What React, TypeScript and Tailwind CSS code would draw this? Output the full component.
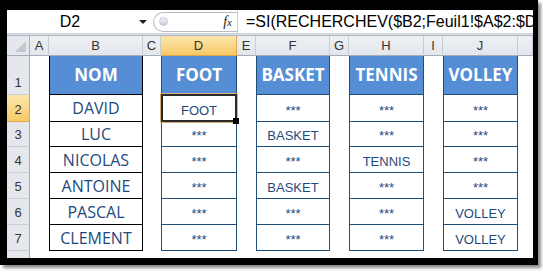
import React from 'react';

const letters = ['A', 'B', 'C', 'D', 'E', 'F', 'G', 'H', 'I', 'J', ''];
const sports = ['FOOT', 'BASKET', 'TENNIS', 'VOLLEY'];
const rows = [
  ['DAVID', 'FOOT', '***', '***', '***'],
  ['LUC', '***', 'BASKET', '***', '***'],
  ['NICOLAS', '***', '***', 'TENNIS', '***'],
  ['ANTOINE', '***', 'BASKET', '***', '***'],
  ['PASCAL', '***', '***', '***', 'VOLLEY'],
  ['CLEMENT', '***', '***', '***', 'VOLLEY'],
];

const arial = "font-['Liberation_Sans',Arial,sans-serif]";
const sans = "font-['Open_Sans','Noto_Sans',sans-serif]";

const RowHeader: React.FC<{ n?: number; active?: boolean }> = ({ n, active }) => (
  <div
    className={
      active
        ? `flex items-end justify-center pb-[4px] border-r border-b border-[#e3a54a] bg-gradient-to-b from-[#fce6ab] to-[#f6c965] text-[13px] leading-[15px] text-[#333] ${arial}`
        : `flex items-end justify-center pb-[4px] border-r border-b border-r-[#a3adba] border-b-[#c8cdd4] bg-[#e4e8ed] text-[13px] leading-[15px] text-[#333] ${arial}`
    }
  >
    {n}
  </div>
);

const Blank = () => <div className="bg-white" />;

const App: React.FC = () => {
  return (
    <div className="w-[543px] h-[273px] bg-white">
      <div className="w-[538px] h-[265px] bg-black pt-[10px] pl-[7px] pr-[5px] pb-[7px] shadow-[3px_3px_3px_rgba(0,0,0,0.45)]">
        <div className="w-[526px] h-[248px] bg-white flex flex-col overflow-hidden">
          {/* Formula bar */}
          <div className="h-[23px] flex items-center shrink-0">
            <div className={`w-[126px] text-center text-[16px] leading-[20px] text-black ${arial}`}>D2</div>
            <div className="w-[20px] flex justify-center">
              <div className="w-0 h-0 border-l-[4px] border-r-[4px] border-t-[4px] border-transparent border-t-[#222]" />
            </div>
            <div className="w-[84px] h-[20px] rounded-l-full border border-r-0 border-[#b4bcc6] bg-white flex items-center justify-between pl-[5px] pr-[5px]">
              <div className="w-[9px] h-[9px] rounded-full bg-gradient-to-b from-[#f4f5f7] to-[#c9ced6] border border-[#c2c8d0]" />
              <span className="font-['Liberation_Serif',serif] italic text-[14px] leading-[16px] text-[#222]">
                f<span className="text-[11px]">x</span>
              </span>
            </div>
            <div className="w-px h-[23px] bg-[#c9cdd3]" />
            <div className={`flex-1 pl-[8px] whitespace-nowrap overflow-hidden text-[16px] leading-[20px] text-black ${arial}`}>
              =SI(RECHERCHEV($B2;Feuil1!$A$2:$D
            </div>
          </div>
          <div className="h-[3px] shrink-0 bg-[#dde2e8] border-t border-t-[#c9cfd6] border-b border-b-[#aab3bf]" />

          {/* Sheet */}
          <div className="grid grid-cols-[23px_19px_94px_18px_76px_19px_74px_19px_75px_19px_75px_15px] grid-rows-[20px_39px_27px_25px_26px_26px_26px_26px_7px]">
            {/* Column headers */}
            <div className="relative bg-[#e4e8ed] border-r border-b border-r-[#a3adba] border-b-[#a3adba]">
              <svg className="absolute right-[3px] bottom-[3px]" width="11" height="11" viewBox="0 0 11 11">
                <polygon points="11,0 11,11 0,11" fill="#c3c8cf" />
              </svg>
            </div>
            {letters.map((l, i) =>
              l === 'D' ? (
                <div
                  key={i}
                  className={`flex items-center justify-center border-r border-b border-[#e3a54a] bg-gradient-to-b from-[#fce6ab] to-[#f6c965] text-[13px] text-[#333] ${arial}`}
                >
                  {l}
                </div>
              ) : (
                <div
                  key={i}
                  className={`flex items-center justify-center border-r border-b border-r-[#c8cdd4] border-b-[#a3adba] bg-gradient-to-b from-[#eef0f3] to-[#e2e6eb] text-[13px] text-[#333] ${arial}`}
                >
                  {l}
                </div>
              )
            )}

            {/* Row 1 : headings */}
            <RowHeader n={1} />
            <Blank />
            <div className={`flex items-center justify-center bg-[#558ed5] border-x border-b border-black text-white font-bold text-[17px] ${sans}`}>
              NOM
            </div>
            {sports.map((s, i) => (
              <React.Fragment key={s}>
                <Blank />
                <div className={`flex items-center justify-center bg-[#558ed5] border-x border-b border-[#1f4e79] text-white font-bold text-[17px] ${sans}`}>
                  {s}
                </div>
                {i === 3 && <Blank />}
              </React.Fragment>
            ))}

            {/* Rows 2-7 */}
            {rows.map((r, ri) => (
              <React.Fragment key={r[0]}>
                <RowHeader n={ri + 2} active={ri === 0} />
                <Blank />
                <div className={`flex items-center justify-center border-x border-b border-black text-[16px] leading-[22px] text-[#1f497d] ${sans}`}>
                  {r[0]}
                </div>
                {r.slice(1).map((v, vi) => (
                  <React.Fragment key={vi}>
                    <Blank />
                    <div className={`relative flex items-end justify-center pb-[3px] border-x border-b border-[#1f4e79] text-[13px] leading-[15px] text-[#1f497d] ${arial}`}>
                      {v}
                      {ri === 0 && vi === 0 && (
                        <div className="absolute -top-[1px] -left-px -right-px -bottom-px border-2 border-[#2a2a2a] shadow-[0_0_0_1px_#d8b27c] z-10">
                          <div className="absolute -right-[4px] -bottom-[4px] w-[6px] h-[6px] bg-black" />
                        </div>
                      )}
                    </div>
                  </React.Fragment>
                ))}
                <Blank />
              </React.Fragment>
            ))}

            {/* Partial row 8 */}
            <div className="bg-[#e4e8ed] border-r border-[#a3adba]" />
          </div>
        </div>
      </div>
    </div>
  );
};

export default App;
